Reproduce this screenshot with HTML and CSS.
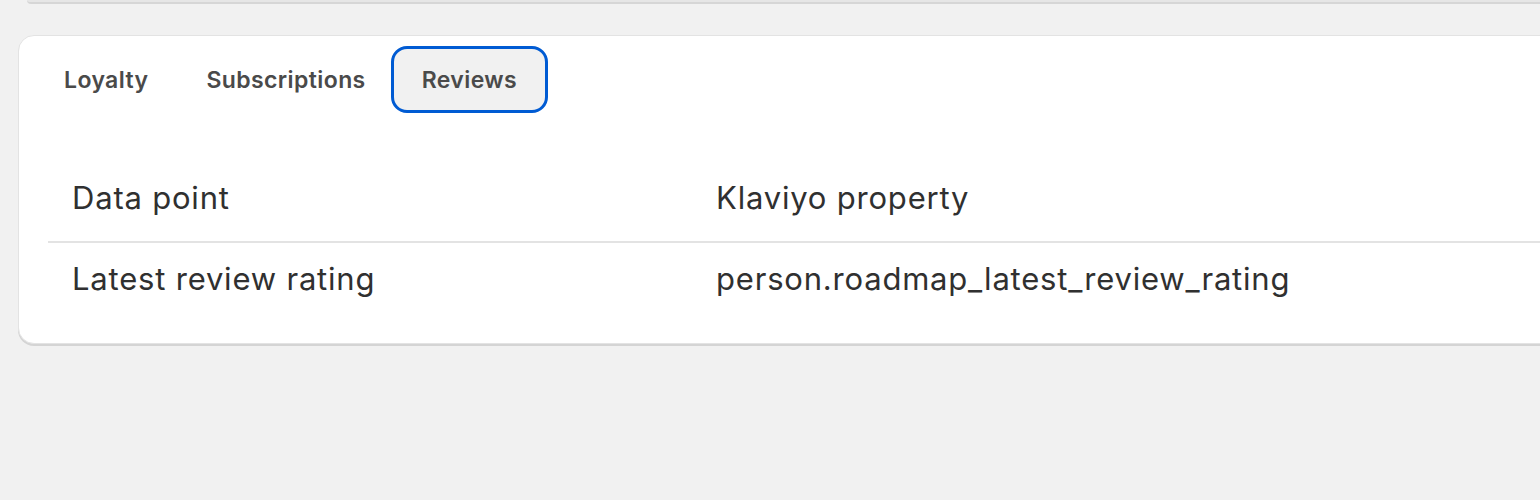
FILE: index.html
```html
<!DOCTYPE html>
<html>
<head>
<meta charset="utf-8">
<link rel="stylesheet" href="styles.css">
</head>
<body>
<div class="page">
  <div class="prev-card"></div>
  <section class="card">
    <nav class="tabs">
      <button class="tab">Loyalty</button>
      <button class="tab">Subscriptions</button>
      <button class="tab tab-active">Reviews</button>
    </nav>
    <table class="data">
      <thead>
        <tr><th class="col1">Data point</th><th>Klaviyo property</th></tr>
      </thead>
      <tbody>
        <tr><td class="col1">Latest review rating</td><td>person.roadmap_latest_review_rating</td></tr>
      </tbody>
    </table>
  </section>
</div>
</body>
</html>
```
FILE: styles.css
```css
html, body {
  margin: 0;
  padding: 0;
  background: #f1f1f1;
  overflow: hidden;
}
body {
  font-family: Inter, "Noto Sans", sans-serif;
  color: #303030;
}
.page {
  width: 1540px;
  height: 500px;
  overflow: hidden;
}
.prev-card {
  margin-left: 27px;
  width: 1600px;
  height: 2px;
  background: #e6e6e6;
  border-bottom: 2px solid #d6d6d6;
  border-bottom-left-radius: 6px;
}
.card {
  margin-top: 31px;
  margin-left: 18px;
  width: 1600px;
  box-sizing: border-box;
  background: #ffffff;
  border: 1px solid #e3e3e3;
  border-radius: 16px;
  box-shadow: 0 2px 0 #d4d4d4;
  padding: 10px 0 27px 16px;
}
.tabs {
  display: flex;
  align-items: center;
}
.tab {
  font-family: Inter, "Noto Sans", sans-serif;
  font-weight: 600;
  font-size: 23px;
  letter-spacing: 0.4px;
  color: #4a4a4a;
  background: transparent;
  border: 3px solid transparent;
  border-radius: 16px;
  height: 67px;
  padding: 0 26px;
  margin: 0;
  cursor: pointer;
}
.tab-active {
  margin-left: -4px;
  padding: 0 28px;
  background: #f1f1f1;
  border-color: #005bd3;
}
.data {
  margin-top: 42px;
  margin-left: 13px;
  border-collapse: collapse;
  width: 1560px;
}
.data th, .data td {
  text-align: left;
  font-weight: 400;
  font-size: 31px;
  letter-spacing: 0.8px;
  line-height: 40px;
  color: #303030;
  padding: 0 24px;
}
.data th {
  padding-top: 23px;
  padding-bottom: 23px;
}
.data thead tr {
  border-bottom: 2px solid #e3e3e3;
}
.data td {
  padding-top: 16px;
  padding-bottom: 17px;
}
.col1 {
  width: 596px;
}
```
